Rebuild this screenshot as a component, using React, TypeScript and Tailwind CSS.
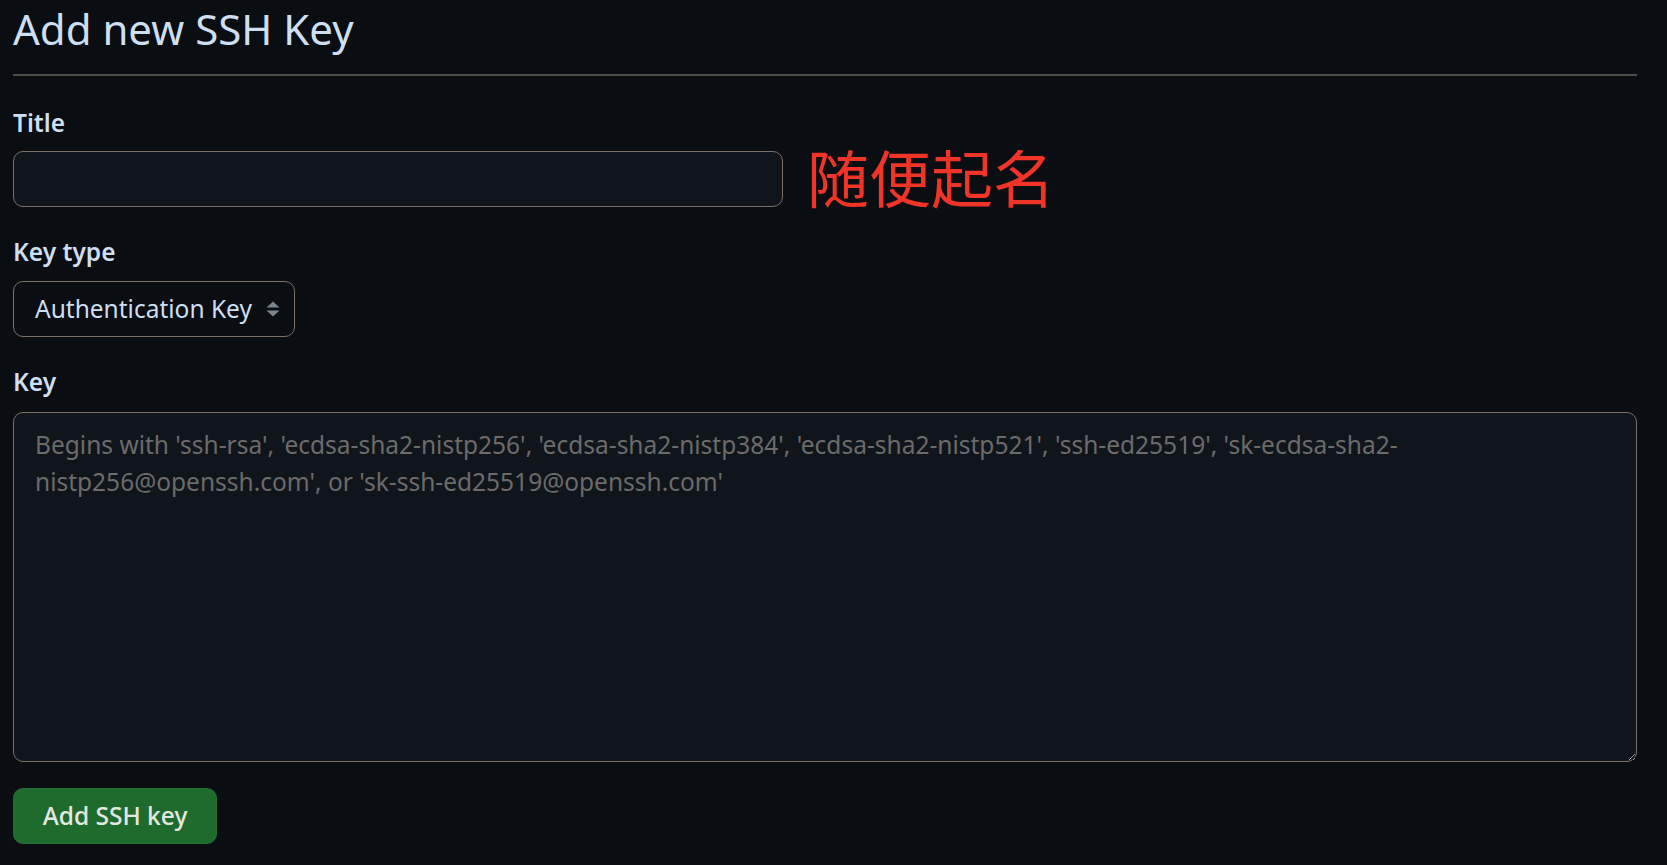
import { useState } from 'react';

const font = { fontFamily: '"Noto Sans", "Liberation Sans", sans-serif' };

function SelectArrows() {
  return (
    <svg width="14" height="16" viewBox="0 0 14 16" className="shrink-0">
      <path d="M7 0.5 L13.5 6.5 H0.5 Z" fill="#7d8590" />
      <path d="M0.5 9.5 H13.5 L7 15.5 Z" fill="#7d8590" />
    </svg>
  );
}

export default function App() {
  const [title, setTitle] = useState('');
  const [key, setKey] = useState('');

  return (
    <div className="min-h-[865px] w-full bg-[#0a0d12] pl-[13px] pr-[30px] pt-[3px]" style={font}>
      {/* Header */}
      <h1 className="text-[42px] leading-[52px] font-normal text-[#cddff0]">Add new SSH Key</h1>
      <div className="mt-[19px] h-[2px] w-[1624px] bg-[#4f4b46]" />

      {/* Title */}
      <label className="mt-[28px] block h-[37px] text-[24.5px] leading-[37px] font-semibold text-[#cddff0]">
        Title
      </label>
      <div className="mt-[4px] flex items-center">
        <input
          value={title}
          onChange={(e) => setTitle(e.target.value)}
          className="h-[56px] w-[770px] rounded-[10px] border-[1.75px] border-[#7a7268] bg-[#10141b] px-[21px] text-[24.5px] text-[#cddff0] outline-none"
          style={font}
        />
        <span
          className="mb-[6px] ml-[24px] text-[62px] leading-none text-[#f03428]"
          style={{ fontFamily: '"Noto Sans CJK SC", "Noto Sans", sans-serif' }}
        >
          随便起名
        </span>
      </div>

      {/* Key type */}
      <label className="mt-[20px] block h-[37px] text-[24.5px] leading-[37px] font-semibold text-[#cddff0]">
        Key type
      </label>
      <div className="mt-[11px] flex h-[56px] w-[282px] items-center justify-between rounded-[10px] border-[1.75px] border-[#7a7268] bg-[#0a0d12] pl-[21px] pr-[14px] text-[24.5px] text-[#cddff0]">
        <span>Authentication Key</span>
        <SelectArrows />
      </div>

      {/* Key */}
      <label className="mt-[26px] block h-[37px] text-[24.5px] leading-[37px] font-semibold text-[#cddff0]">
        Key
      </label>
      <textarea
        value={key}
        onChange={(e) => setKey(e.target.value)}
        placeholder="Begins with 'ssh-rsa', 'ecdsa-sha2-nistp256', 'ecdsa-sha2-nistp384', 'ecdsa-sha2-nistp521', 'ssh-ed25519', 'sk-ecdsa-sha2-nistp256@openssh.com', or 'sk-ssh-ed25519@openssh.com'"
        className="mt-[12px] block h-[350px] w-[1624px] rounded-[10px] border-[1.75px] border-[#7a7268] bg-[#10141b] px-[21px] pt-[14px] text-[24.5px] leading-[36.75px] text-[#cddff0] outline-none placeholder:text-[#6b6b6b]"
        style={font}
      />

      {/* Submit */}
      <button
        className="mt-[26px] flex h-[56px] w-[204px] items-center justify-center rounded-[10px] border border-[#246f33] bg-[#1f6b2e] text-[24.5px] font-medium text-[#e4e8e1]"
        style={font}
      >
        Add SSH key
      </button>
    </div>
  );
}
